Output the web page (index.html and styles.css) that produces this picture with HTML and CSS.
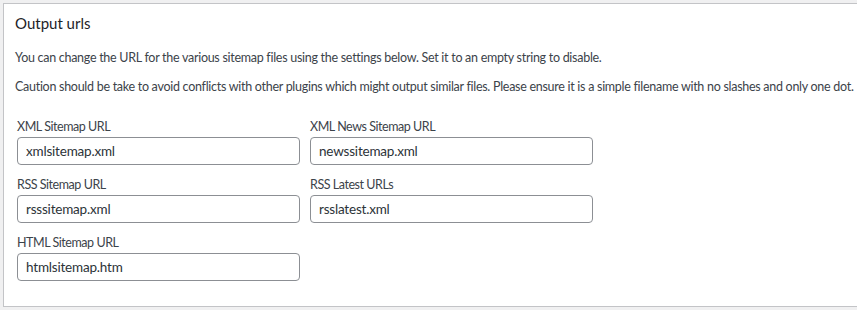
FILE: index.html
```html
<!DOCTYPE html>
<html>
<head>
<meta charset="utf-8">
<link rel="stylesheet" href="styles.css">
</head>
<body>
<div class="panel">
  <h2 class="title">Output urls</h2>
  <p class="note">You can change the URL for the various sitemap files using the settings below. Set it to an empty string to disable.</p>
  <p class="note">Caution should be take to avoid conflicts with other plugins which might output similar files. Please ensure it is a simple filename with no slashes and only one dot.</p>
  <div class="fields">
    <div class="field">
      <label class="label">XML Sitemap URL</label>
      <input class="input" type="text" value="xmlsitemap.xml">
    </div>
    <div class="field">
      <label class="label">XML News Sitemap URL</label>
      <input class="input" type="text" value="newssitemap.xml">
    </div>
    <div class="field">
      <label class="label">RSS Sitemap URL</label>
      <input class="input" type="text" value="rsssitemap.xml">
    </div>
    <div class="field">
      <label class="label">RSS Latest URLs</label>
      <input class="input" type="text" value="rsslatest.xml">
    </div>
    <div class="field">
      <label class="label">HTML Sitemap URL</label>
      <input class="input" type="text" value="htmlsitemap.htm">
    </div>
  </div>
</div>
</body>
</html>
```
FILE: styles.css
```css
html, body {
  margin: 0;
  padding: 0;
  background: #f0f0f1;
}
body {
  padding: 3px 0 0 3px;
  font-family: Lato, "Noto Sans", sans-serif;
  color: #3c434a;
  overflow: hidden;
}
.panel {
  box-sizing: border-box;
  width: 880px;
  height: 304px;
  background: #fff;
  border: 1px solid #c3c4c7;
  border-right: none;
  padding: 10px 12px 0 11px;
}
.title {
  margin: 0;
  font-size: 15px;
  font-weight: 400;
  line-height: 18px;
  color: #1d2327;
}
.note {
  margin: 0;
  font-size: 12.5px;
  letter-spacing: -0.28px;
  line-height: 19px;
  white-space: nowrap;
}
.title + .note {
  margin-top: 16px;
}
.note + .note {
  margin-top: 10px;
}
.fields {
  margin-top: 22px;
  display: grid;
  grid-template-columns: 283px 283px;
  column-gap: 10px;
  row-gap: 11px;
  padding-left: 2px;
}
.field {
  display: flex;
  flex-direction: column;
}
.label {
  font-size: 12.5px;
  letter-spacing: -0.45px;
  line-height: 18px;
  margin-bottom: 1px;
}
.input {
  box-sizing: border-box;
  height: 28px;
  width: 283px;
  margin: 0;
  border: 1px solid #8c8f94;
  border-radius: 4px;
  padding: 0 8px;
  font-family: Lato, "Noto Sans", sans-serif;
  font-size: 13.5px;
  letter-spacing: -0.2px;
  color: #2c3338;
  background: #fff;
}
```
